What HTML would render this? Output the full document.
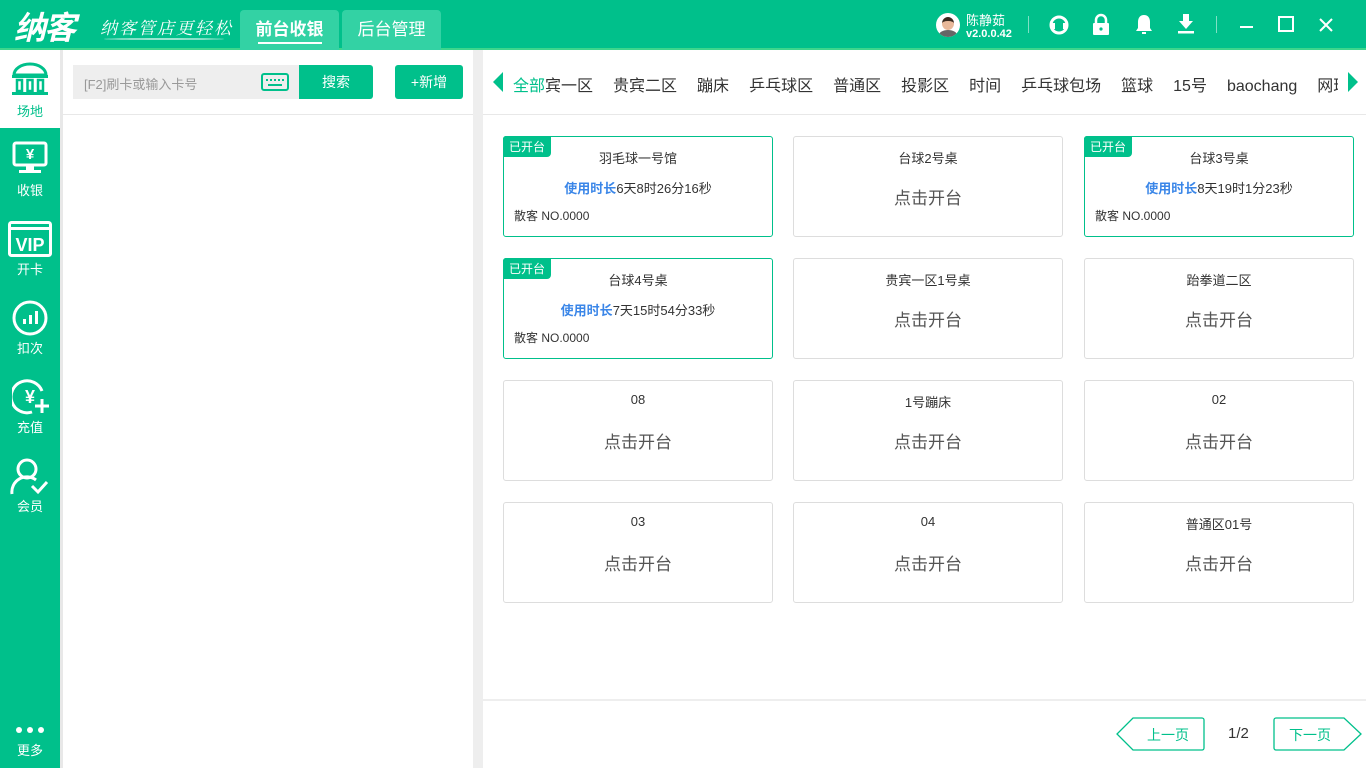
<!DOCTYPE html>
<html><head><meta charset="utf-8"><style>
*{margin:0;padding:0;box-sizing:border-box}
body{width:1366px;height:768px;overflow:hidden;font-family:"Liberation Sans","Noto Sans CJK SC",sans-serif;background:#fff;position:relative;color:#333}
.top{position:absolute;left:0;top:0;width:1366px;height:50px;background:#00c08b;border-bottom:2px solid #3dd68c}
.abs{position:absolute}
.side{position:absolute;left:0;top:50px;width:60px;height:718px;background:#00c08b}
.side .it{position:absolute;left:0;width:60px;text-align:center;color:#fff;font-size:13px}
.card{position:absolute;width:270px;height:101px;border:1px solid #ddd;border-radius:3px;text-align:center}
.card.on{border-color:#00c08b}
.card .t{position:absolute;top:11px;left:0;right:0;font-size:13px;color:#333}
.card .c{position:absolute;top:47px;left:0;right:0;font-size:17px;color:#555}
.card .d{position:absolute;top:41px;left:0;right:0;font-size:13px;color:#333}
.card .d b{color:#3a86e8}
.card .g{position:absolute;top:70px;left:10px;font-size:12px;color:#333}
.card .tag{position:absolute;top:-1px;left:-1px;background:#00c08b;color:#fff;font-size:12px;padding:2px 6px;border-radius:3px 0 4px 0}
</style></head><body>
<div class="top">
 <div class="abs" style="left:14px;top:3px;font-size:32px;font-weight:bold;color:#fff;letter-spacing:-2px;font-style:italic">纳客</div>
 <div class="abs" style="left:100px;top:14px;font-size:17px;color:#fff;font-family:'Liberation Serif','Noto Serif CJK SC',serif;font-style:italic;letter-spacing:2px">纳客管店更轻松</div>
 <div class="abs" style="left:104px;top:38px;width:120px;height:2px;background:rgba(255,255,255,.6);border-radius:50%"></div>
 <div class="abs" style="left:240px;top:10px;width:99px;height:40px;background:#33d2a4;border-radius:4px 4px 0 0;color:#fff;font-size:17px;font-weight:bold;text-align:center;line-height:40px">前台收银<div style="position:absolute;left:18px;top:32px;width:64px;height:2px;background:#fff"></div></div>
 <div class="abs" style="left:342px;top:10px;width:99px;height:40px;background:#33d2a4;border-radius:4px 4px 0 0;color:#fff;font-size:17px;text-align:center;line-height:40px">后台管理</div>
 <div class="abs" style="left:936px;top:13px;width:24px;height:24px;border-radius:50%;background:#fff;overflow:hidden"><div style="position:absolute;left:6px;top:4px;width:12px;height:13px;border-radius:50%;background:#e8b89a;border-top:4px solid #3a2a20"></div><div style="position:absolute;left:3px;top:17px;width:18px;height:10px;border-radius:50% 50% 0 0;background:#666"></div></div>
 <div class="abs" style="left:966px;top:10px;color:#fff;font-size:13px">陈静茹</div>
 <div class="abs" style="left:966px;top:28px;color:#fff;font-size:11px;font-weight:bold">v2.0.0.42</div>
 <div class="abs" style="left:1028px;top:16px;width:1px;height:17px;background:rgba(255,255,255,.5)"></div>
 <svg class="abs" style="left:1048px;top:14px" width="22" height="22" viewBox="0 0 22 22"><circle cx="11" cy="11" r="8" fill="none" stroke="#fff" stroke-width="3"/><rect x="3" y="9" width="4" height="6" fill="#fff"/><rect x="15" y="9" width="4" height="6" fill="#fff"/><path d="M9 19h5" stroke="#fff" stroke-width="2"/></svg>
 <svg class="abs" style="left:1092px;top:13px" width="18" height="22" viewBox="0 0 18 22"><path d="M4 10V7a5 5 0 0 1 10 0v3" fill="none" stroke="#fff" stroke-width="2.5"/><rect x="1" y="10" width="16" height="12" rx="1" fill="#fff"/><circle cx="9" cy="16" r="1.6" fill="#00c08b"/></svg>
 <svg class="abs" style="left:1134px;top:13px" width="20" height="22" viewBox="0 0 20 22"><path d="M10 2c-4 0-6 3-6 7v6l-2 3h16l-2-3V9c0-4-2-7-6-7z" fill="#fff"/><path d="M8 20h4" stroke="#fff" stroke-width="2"/></svg>
 <svg class="abs" style="left:1176px;top:13px" width="20" height="22" viewBox="0 0 20 22"><path d="M7 1h6v7h4l-7 8-7-8h4z" fill="#fff"/><rect x="2" y="18" width="16" height="2.5" fill="#fff"/></svg>
 <div class="abs" style="left:1216px;top:16px;width:1px;height:17px;background:rgba(255,255,255,.5)"></div>
 <div class="abs" style="left:1240px;top:26px;width:13px;height:2px;background:#fff"></div>
 <div class="abs" style="left:1278px;top:16px;width:16px;height:16px;border:2px solid #fff"></div>
 <svg class="abs" style="left:1319px;top:18px" width="14" height="14"><path d="M1 1L13 13M13 1L1 13" stroke="#fff" stroke-width="2"/></svg>
</div>
<div class="side">
 <div style="position:absolute;left:0;top:0;width:60px;height:78px;background:#fff"></div>
 <svg class="abs" style="left:10px;top:12px" width="40" height="34" viewBox="0 0 40 34"><path d="M4 13a16 11 0 0 1 32 0z" fill="none" stroke="#00c08b" stroke-width="3"/><rect x="2" y="13" width="36" height="3" fill="#00c08b"/><rect x="7" y="18" width="5" height="11" fill="none" stroke="#00c08b" stroke-width="2.5"/><rect x="17.5" y="18" width="5" height="11" fill="none" stroke="#00c08b" stroke-width="2.5"/><rect x="28" y="18" width="5" height="11" fill="none" stroke="#00c08b" stroke-width="2.5"/><rect x="2" y="30" width="36" height="3" fill="#00c08b"/></svg>
 <div class="it" style="top:51px;color:#00c08b">场地</div>
 <svg class="abs" style="left:12px;top:91px" width="36" height="34" viewBox="0 0 36 34"><rect x="2" y="2" width="32" height="22" rx="2" fill="none" stroke="#fff" stroke-width="3"/><text x="18" y="18" fill="#fff" font-size="15" font-weight="bold" text-anchor="middle" font-family="Liberation Sans">¥</text><rect x="14" y="24" width="8" height="5" fill="#fff"/><rect x="7" y="29" width="22" height="3" fill="#fff"/></svg>
 <div class="it" style="top:130px">收银</div>
 <svg class="abs" style="left:8px;top:171px" width="44" height="36" viewBox="0 0 44 36"><rect x="1.5" y="1.5" width="41" height="33" rx="2" fill="none" stroke="#fff" stroke-width="3"/><rect x="1.5" y="6" width="41" height="3" fill="#fff"/><text x="22" y="30" fill="#fff" font-size="18" font-weight="bold" text-anchor="middle" font-family="Liberation Sans">VIP</text></svg>
 <div class="it" style="top:209px">开卡</div>
 <svg class="abs" style="left:12px;top:250px" width="36" height="36" viewBox="0 0 36 36"><circle cx="18" cy="18" r="16" fill="none" stroke="#fff" stroke-width="3"/><rect x="11" y="19" width="3" height="5" fill="#fff"/><rect x="17" y="15" width="3" height="9" fill="#fff"/><rect x="23" y="11" width="3" height="13" fill="#fff"/></svg>
 <div class="it" style="top:288px">扣次</div>
 <svg class="abs" style="left:12px;top:329px" width="38" height="36" viewBox="0 0 38 36"><path d="M30 12A16 16 0 1 0 20 33" fill="none" stroke="#fff" stroke-width="3"/><text x="18" y="24" fill="#fff" font-size="18" font-weight="bold" text-anchor="middle" font-family="Liberation Sans">¥</text><path d="M30 20v14M23 27h14" stroke="#fff" stroke-width="3"/></svg>
 <div class="it" style="top:367px">充值</div>
 <svg class="abs" style="left:10px;top:408px" width="40" height="38" viewBox="0 0 40 38"><circle cx="17" cy="11" r="9" fill="none" stroke="#fff" stroke-width="3"/><path d="M2 36a15 15 0 0 1 24-14" fill="none" stroke="#fff" stroke-width="3"/><path d="M22 28l6 6 9-10" fill="none" stroke="#fff" stroke-width="3"/></svg>
 <div class="it" style="top:446px">会员</div>
 <div class="abs" style="left:16px;top:677px;width:28px;height:6px"><span style="position:absolute;left:0;width:6px;height:6px;border-radius:50%;background:#fff"></span><span style="position:absolute;left:11px;width:6px;height:6px;border-radius:50%;background:#fff"></span><span style="position:absolute;left:22px;width:6px;height:6px;border-radius:50%;background:#fff"></span></div>
 <div class="it" style="top:690px">更多</div>
</div>
<div class="abs" style="left:60px;top:50px;width:3px;height:718px;background:#e8e8e8"></div>
<div class="abs" style="left:473px;top:50px;width:10px;height:718px;background:#eee"></div>
<div class="abs" style="left:73px;top:65px;width:226px;height:34px;background:#eee"></div>
<div class="abs" style="left:84px;top:74px;font-size:13px;color:#999">[F2]刷卡或输入卡号</div>
<svg class="abs" style="left:261px;top:73px" width="28" height="18"><rect x="1" y="1" width="26" height="16" rx="2" fill="none" stroke="#00c08b" stroke-width="2"/><path d="M5 7h2M9 7h2M13 7h2M17 7h2M21 7h2M7 12h14" stroke="#00c08b" stroke-width="2"/></svg>
<div class="abs" style="left:299px;top:65px;width:74px;height:34px;background:#00c08b;color:#fff;font-size:14px;text-align:center;line-height:34px;border-radius:0 3px 3px 0">搜索</div>
<div class="abs" style="left:395px;top:65px;width:68px;height:34px;background:#00c08b;color:#fff;font-size:14px;text-align:center;line-height:34px;border-radius:3px">+新增</div>
<div class="abs" style="left:63px;top:114px;width:410px;height:1px;background:#e8e8e8"></div>
<div class="abs" style="left:483px;top:114px;width:883px;height:1px;background:#e8e8e8"></div>
<svg class="abs" style="left:493px;top:72px" width="10" height="20"><path d="M10 0L0 10 10 20z" fill="#00c08b"/></svg>
<svg class="abs" style="left:1348px;top:72px" width="10" height="20"><path d="M0 0L10 10 0 20z" fill="#00c08b"/></svg>
<div class="abs" style="left:513px;top:72px;width:825px;overflow:hidden;white-space:nowrap;font-size:16px;color:#333">
<span style="color:#00c08b">全部</span>宾一区<span style="margin-left:20px">贵宾二区</span><span style="margin-left:20px">蹦床</span><span style="margin-left:20px">乒乓球区</span><span style="margin-left:20px">普通区</span><span style="margin-left:20px">投影区</span><span style="margin-left:20px">时间</span><span style="margin-left:20px">乒乓球包场</span><span style="margin-left:20px">篮球</span><span style="margin-left:20px">15号</span><span style="margin-left:20px">baochang</span><span style="margin-left:20px">网球</span></div>

<div class="card on" style="left:503px;top:136px"><div class="tag">已开台</div><div class="t">羽毛球一号馆</div><div class="d"><b>使用时长</b>6天8时26分16秒</div><div class="g">散客 NO.0000</div></div>
<div class="card" style="left:793px;top:136px"><div class="t">台球2号桌</div><div class="c">点击开台</div></div>
<div class="card on" style="left:1084px;top:136px"><div class="tag">已开台</div><div class="t">台球3号桌</div><div class="d"><b>使用时长</b>8天19时1分23秒</div><div class="g">散客 NO.0000</div></div>
<div class="card on" style="left:503px;top:258px"><div class="tag">已开台</div><div class="t">台球4号桌</div><div class="d"><b>使用时长</b>7天15时54分33秒</div><div class="g">散客 NO.0000</div></div>
<div class="card" style="left:793px;top:258px"><div class="t">贵宾一区1号桌</div><div class="c">点击开台</div></div>
<div class="card" style="left:1084px;top:258px"><div class="t">跆拳道二区</div><div class="c">点击开台</div></div>
<div class="card" style="left:503px;top:380px"><div class="t">08</div><div class="c">点击开台</div></div>
<div class="card" style="left:793px;top:380px"><div class="t">1号蹦床</div><div class="c">点击开台</div></div>
<div class="card" style="left:1084px;top:380px"><div class="t">02</div><div class="c">点击开台</div></div>
<div class="card" style="left:503px;top:502px"><div class="t">03</div><div class="c">点击开台</div></div>
<div class="card" style="left:793px;top:502px"><div class="t">04</div><div class="c">点击开台</div></div>
<div class="card" style="left:1084px;top:502px"><div class="t">普通区01号</div><div class="c">点击开台</div></div>

<div class="abs" style="left:483px;top:699px;width:883px;height:2px;background:#eee"></div>
<svg class="abs" style="left:1116px;top:717px" width="90" height="34"><path d="M17 1H86a2 2 0 0 1 2 2V31a2 2 0 0 1-2 2H17L1 17z" fill="none" stroke="#00c08b" stroke-width="1.3"/><text x="52" y="23" fill="#00c08b" font-size="14" text-anchor="middle" font-family="Noto Sans CJK SC">上一页</text></svg>
<div class="abs" style="left:1228px;top:725px;font-size:15px;color:#333">1/2</div>
<svg class="abs" style="left:1273px;top:717px" width="90" height="34"><path d="M3 1H71L88 17 71 33H3a2 2 0 0 1-2-2V3a2 2 0 0 1 2-2z" fill="none" stroke="#00c08b" stroke-width="1.3"/><text x="37" y="23" fill="#00c08b" font-size="14" text-anchor="middle" font-family="Noto Sans CJK SC">下一页</text></svg>
</body></html>
